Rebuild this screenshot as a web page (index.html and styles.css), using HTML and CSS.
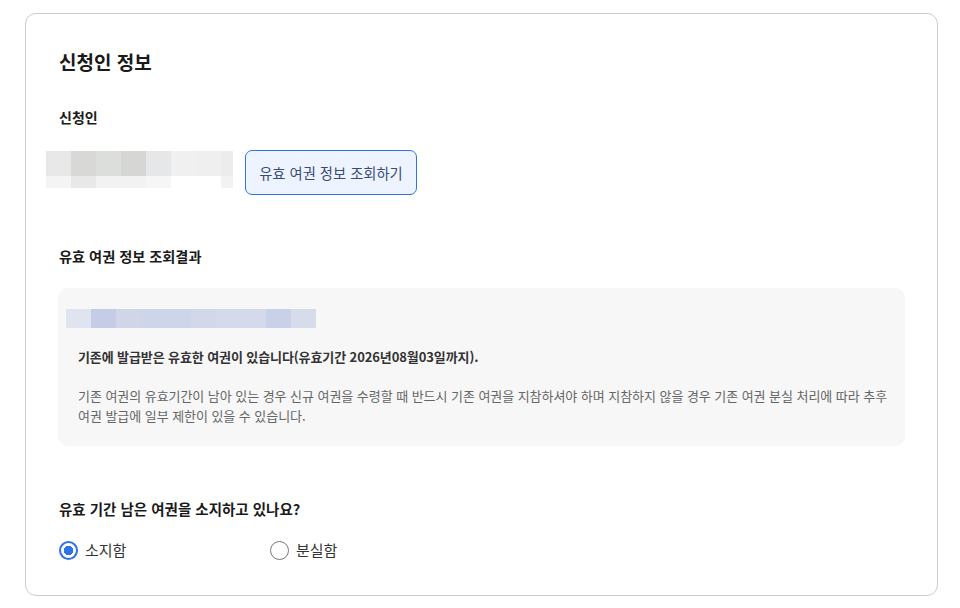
FILE: index.html
```html
<!DOCTYPE html>
<html lang="ko">
<head>
<meta charset="utf-8">
<link rel="stylesheet" href="styles.css">
</head>
<body>
<div class="card">
  <h1 class="title">신청인 정보</h1>
  <h2 class="label lbl-applicant">신청인</h2>
  <div class="applicant-row">
    <div class="blur gray">
      <span class="g1"></span><span class="g2"></span><span class="g3"></span><span class="g4"></span><span class="g5"></span><span class="g6"></span><span class="g7"></span><span class="g8"></span>
    </div>
    <button class="lookup">유효 여권 정보 조회하기</button>
  </div>
  <h2 class="label lbl-result">유효 여권 정보 조회결과</h2>
  <div class="result">
    <div class="blur blue">
      <span class="b1"></span><span class="b2"></span><span class="b3"></span><span class="b4"></span><span class="b5"></span><span class="b6"></span><span class="b7"></span><span class="b8"></span><span class="b9"></span><span class="b10"></span>
    </div>
    <p class="notice">기존에 발급받은 유효한 여권이 있습니다(유효기간 2026년08월03일까지).</p>
    <p class="desc">기존 여권의 유효기간이 남아 있는 경우 신규 여권을 수령할 때 반드시 기존 여권을 지참하셔야 하며 지참하지 않을 경우 기존 여권 분실 처리에 따라 추후 여권 발급에 일부 제한이 있을 수 있습니다.</p>
  </div>
  <h2 class="label lbl-question">유효 기간 남은 여권을 소지하고 있나요?</h2>
  <div class="radios">
    <label class="radio checked"><span class="dot"></span>소지함</label>
    <label class="radio"><span class="dot"></span>분실함</label>
  </div>
</div>
</body>
</html>
```
FILE: styles.css
```css
* { box-sizing: border-box; }
html, body { margin: 0; padding: 0; background: #fff; }
body {
  font-family: "Noto Sans CJK KR", "Noto Sans", sans-serif;
  color: #1a1a1a;
  padding: 13px 22px 0 25px;
}
.card {
  width: 913px;
  height: 583px;
  border: 1px solid #cccccc;
  border-radius: 11px;
  padding: 34px 33px 0 33px;
}
.title {
  margin: 0;
  font-size: 19px;
  font-weight: 700;
  line-height: 28px;
  color: #1a1a1a;
}
.label {
  margin: 0;
  font-size: 14px;
  font-weight: 700;
  line-height: 20px;
  color: #1a1a1a;
}
.lbl-applicant { margin-top: 31px; }
.applicant-row {
  display: flex;
  align-items: flex-start;
  gap: 12px;
  margin-top: 23px;
  margin-left: -13px;
}
.blur { display: flex; flex-wrap: wrap; }
.blur span { display: block; }
.gray { width: 187px; margin-top: 1px; }
.gray span { width: 25px; height: 37px; }
.gray .g8 { width: 12px; }
.g1 { background: linear-gradient(#e8e8e8 0 25px, #f4f4f4 25px); }
.g2 { background: linear-gradient(#d8d8d6 0 25px, #e8e8e8 25px); }
.g3 { background: linear-gradient(#dcdedc 0 25px, #f2f2f2 25px); }
.g4 { background: linear-gradient(#d6d6d4 0 25px, #f2f2f2 25px); }
.g5 { background: linear-gradient(#e6e7e9 0 25px, #f6f6f6 25px); }
.g6 { background: linear-gradient(#f0f0f0 0 25px, #ffffff 25px); }
.g7 { background: linear-gradient(#efefef 0 25px, #ffffff 25px); }
.g8 { background: linear-gradient(#ececec 0 25px, #f2f2f2 25px); }
.lookup {
  width: 172px;
  height: 45px;
  border: 1px solid #2f72e6;
  border-radius: 7px;
  background: #eef4ff;
  color: #3a4b78;
  font-family: inherit;
  font-size: 14.3px;
  padding: 0;
  cursor: pointer;
}
.lbl-result { margin-top: 51px; font-size: 14.2px; }
.result {
  margin-top: 22px;
  background: #f7f7f7;
  border-radius: 10px;
  padding: 21px 16px 20px 20px;
  height: 158px;
  width: 847px;
  margin-left: -1px;
}
.blue { width: 250px; margin-left: -12px; }
.blue span { width: 25px; height: 19px; }
.b1 { background: #e0e3f0; }
.b2 { background: #c5cde6; }
.b3 { background: #d0d6e8; }
.b4 { background: #cdd5ea; }
.b5 { background: #cdd5ea; }
.b6 { background: #d2d8ea; }
.b7 { background: #d4d9eb; }
.b8 { background: #d4d9eb; }
.b9 { background: #c9d1e8; }
.b10 { background: #d7dceb; }
.notice {
  margin: 19px 0 0 0;
  font-size: 13px;
  font-weight: 700;
  line-height: 20px;
  letter-spacing: -0.1px;
  color: #333;
}
.desc {
  margin: 19px 0 0 0;
  font-size: 13px;
  line-height: 20px;
  letter-spacing: -0.05px;
  color: #666;
}
.lbl-question { margin-top: 53px; font-size: 14.5px; }
.radios {
  display: flex;
  margin-top: 20px;
}
.radio {
  display: flex;
  align-items: center;
  gap: 7px;
  font-size: 15px;
  line-height: 22px;
  color: #333;
  width: 211px;
}
.dot {
  width: 19px;
  height: 19px;
  border-radius: 50%;
  border: 1.5px solid #777;
  background: #fff;
}
.checked .dot {
  border: 2px solid #2f72e6;
  background: radial-gradient(circle, #2f72e6 0 4.5px, #fff 5px);
}
```
